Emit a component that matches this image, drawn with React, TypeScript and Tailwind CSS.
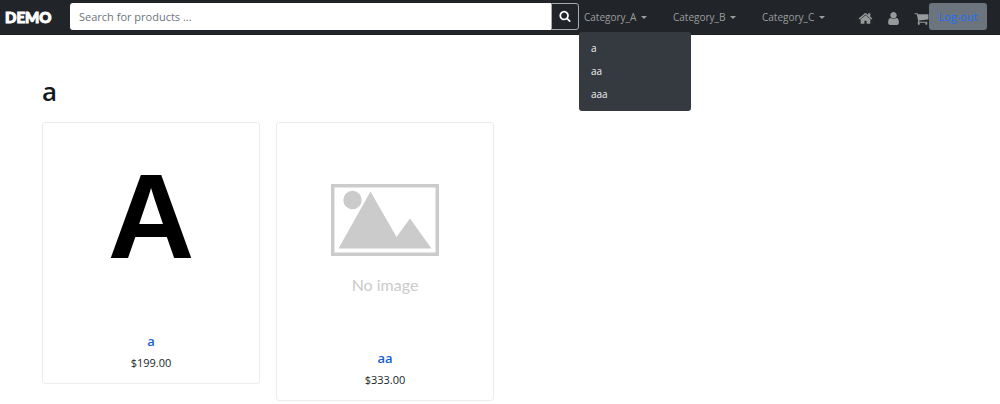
import React from "react";

const ICONS = {
  search:
    "M1216 832q0-185-131.5-316.5t-316.5-131.5-316.5 131.5-131.5 316.5 131.5 316.5 316.5 131.5 316.5-131.5 131.5-316.5zm512 832q0 52-38 90t-90 38q-54 0-90-38l-343-342q-179 124-399 124-143 0-273.5-55.5t-225-150-150-225-55.5-273.5 55.5-273.5 150-225 225-150 273.5-55.5 273.5 55.5 225 150 150 225 55.5 273.5q0 220-124 399l343 343q37 37 37 90z",
  home:
    "M1472 992v480q0 26-19 45t-45 19h-384v-384h-256v384h-384q-26 0-45-19t-19-45v-480q0-1 .5-3t.5-3l575-474 575 474q1 2 1 6zm223-69l-62 74q-8 9-21 11h-3q-13 0-21-7l-692-577-692 577q-12 8-24 7-13-2-21-11l-62-74q-8-10-7-23.5t11-21.5l719-599q32-26 76-26t76 26l244 204v-195q0-14 9-23t23-9h192q14 0 23 9t9 23v408l219 182q10 8 11 21.5t-7 23.5z",
  user:
    "M1536 1399q0 109-62.5 187t-150.5 78h-854q-88 0-150.5-78t-62.5-187q0-85 8.5-160.5t31.5-152 58.5-131 94-89 134.5-34.5q131 128 313 128t313-128q76 0 134.5 34.5t94 89 58.5 131 31.5 152 8.5 160.5zm-256-887q0 159-112.5 271.5t-271.5 112.5-271.5-112.5-112.5-271.5 112.5-271.5 271.5-112.5 271.5 112.5 112.5 271.5z",
  cart:
    "M704 1536q0 52-38 90t-90 38-90-38-38-90 38-90 90-38 90 38 38 90zm896 0q0 52-38 90t-90 38-90-38-38-90 38-90 90-38 90 38 38 90zm128-1088v512q0 24-16.5 42.5t-40.5 21.5l-1044 122q13 60 13 70 0 16-24 64h920q26 0 45 19t19 45-19 45-45 19h-1024q-26 0-45-19t-19-45q0-11 8-31.5t16-36 21.5-40 15.5-29.5l-177-823h-204q-26 0-45-19t-19-45 19-45 45-19h256q16 0 28.5 6.5t19.5 15.5 13 24.5 8 26 5.5 29.5 4.5 26h1201q26 0 45 19t19 45z",
};

function Icon({ name, className }: { name: keyof typeof ICONS; className: string }) {
  return (
    <svg viewBox="0 0 1792 1792" fill="currentColor" aria-hidden="true" className={className}>
      <path d={ICONS[name]} />
    </svg>
  );
}

function Category({ label, items }: { label: string; items?: string[] }) {
  return (
    <li className="relative w-[89px]">
      <button
        type="button"
        aria-haspopup="true"
        aria-expanded={Boolean(items)}
        className="flex items-center gap-[5px] whitespace-nowrap text-[#9b9d9f]"
      >
        {label}
        <span className="border-x-[3px] border-t-[3px] border-x-transparent border-t-current" />
      </button>
      {items && (
        <ul className="absolute -left-[5px] top-[23px] z-10 w-28 rounded-[3px] bg-[#343a40] py-[5px] text-[#f1f3f5]">
          {items.map((item) => (
            <li key={item}>
              <a href="#" className="block px-3 leading-[23px]">
                {item}
              </a>
            </li>
          ))}
        </ul>
      )}
    </li>
  );
}

function NoImage() {
  return (
    <div className="flex flex-col items-center pt-[61px] text-[#cbcbcb]">
      <svg viewBox="0 0 108 72" fill="currentColor" aria-hidden="true" className="h-[72px] w-[108px]">
        <path fillRule="evenodd" d="M0 0h108v72H0zM3.5 3.5v65h101v-65z" />
        <circle cx="21.5" cy="16" r="9.2" />
        <path d="M7.5 64.5 39.5 7.5 65.5 53 79 34.5 100.5 64.5z" />
      </svg>
      <span className="mt-[17px] font-['Lato',sans-serif] text-[16px] leading-6">No image</span>
    </div>
  );
}

function Product({ name, price, children }: { name: string; price: string; children: React.ReactNode }) {
  return (
    <article className="w-[218px] rounded-[3px] border border-[#ececec] pb-[10px] text-center">
      {children}
      <h2 className="text-[13px] font-semibold leading-5">
        <a href="#" className="text-[#1360d0]">
          {name}
        </a>
      </h2>
      <p className="mt-[2px] text-[11px] leading-5 text-[#212529]">{price}</p>
    </article>
  );
}

export default function App() {
  return (
    <div className="min-h-screen bg-white font-['Open_Sans','Noto_Sans',sans-serif] text-[#16191c]">
      <nav className="flex h-[35px] items-center border-b border-[#1d2024] bg-[#212529] pb-[2px] pl-[5px] pr-[13px] text-[10px] leading-4">
        <a
          href="#"
          className="w-[65px] shrink-0 pt-[2px] font-['Lato',sans-serif] text-[15px] font-black text-white [-webkit-text-stroke:1px_white]"
        >
          DEMO
        </a>
        <form className="flex h-[27px] min-w-0 flex-1" onSubmit={(e) => e.preventDefault()}>
          <input
            type="text"
            aria-label="Search for products"
            placeholder="Search for products ..."
            className="min-w-0 flex-1 rounded-l-[3px] bg-white px-[9px] pt-[2px] text-[11px] text-[#212529] outline-none placeholder:text-[#6c757d]"
          />
          <button
            type="submit"
            aria-label="Search"
            className="flex w-7 items-center justify-center rounded-r-[3px] border border-[#a9abad] text-white"
          >
            <Icon name="search" className="size-3" />
          </button>
        </form>
        <ul className="ml-[5px] flex shrink-0 pt-[2px]">
          <Category label="Category_A" items={["a", "aa", "aaa"]} />
          <Category label="Category_B" />
          <Category label="Category_C" />
        </ul>
        <div className="ml-[7px] flex shrink-0 items-center gap-[13px] pt-1 text-[#97999b]">
          <a href="#" aria-label="Home">
            <Icon name="home" className="size-[15px]" />
          </a>
          <a href="#" aria-label="Account">
            <Icon name="user" className="size-[15px]" />
          </a>
          <a href="#" aria-label="Cart">
            <Icon name="cart" className="size-[15px]" />
          </a>
        </div>
        <button
          type="button"
          className="h-[27px] w-[58px] shrink-0 rounded-[3px] bg-[#6c757d] pt-[2px] text-[11px] text-[#1a6dfa]"
        >
          Log-out
        </button>
      </nav>

      <main className="px-[42px] pt-9">
        <h1 className="text-[26px] font-semibold leading-10">a</h1>
        <section className="mt-[11px] flex flex-wrap items-start gap-4">
          <Product name="a" price="$199.00">
            <div className="flex h-52 justify-center pt-[31px] font-['Liberation_Sans',sans-serif] text-[120px] font-bold leading-[124px] text-black">
              A
            </div>
          </Product>
          <Product name="aa" price="$333.00">
            <div className="h-[225px]">
              <NoImage />
            </div>
          </Product>
        </section>
      </main>
    </div>
  );
}
